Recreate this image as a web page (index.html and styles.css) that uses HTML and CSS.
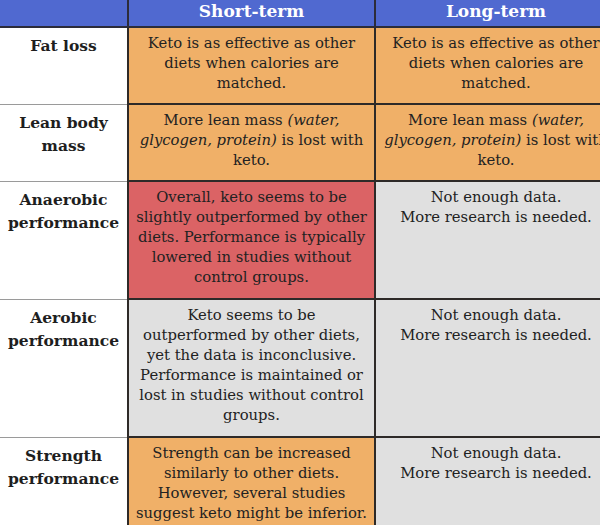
FILE: index.html
```html
<!DOCTYPE html>
<html>
<head>
<meta charset="utf-8">
<link rel="stylesheet" href="styles.css">
</head>
<body>
<table class="grid">
  <colgroup>
    <col class="c-label">
    <col class="c-short">
    <col class="c-long">
  </colgroup>
  <thead>
    <tr>
      <th class="head-blank"></th>
      <th class="head">Short-term</th>
      <th class="head">Long-term</th>
    </tr>
  </thead>
  <tbody>
    <tr class="r1">
      <th class="label">Fat loss</th>
      <td class="cell orange">Keto is as effective as other<br>diets when calories are<br>matched.</td>
      <td class="cell orange">Keto is as effective as other<br>diets when calories are<br>matched.</td>
    </tr>
    <tr class="r2">
      <th class="label">Lean body<br>mass</th>
      <td class="cell orange">More lean mass <em>(water,<br>glycogen, protein)</em> is lost with<br>keto.</td>
      <td class="cell orange">More lean mass <em>(water,<br>glycogen, protein)</em> is lost with<br>keto.</td>
    </tr>
    <tr class="r3">
      <th class="label">Anaerobic<br>performance</th>
      <td class="cell red">Overall, keto seems to be<br>slightly outperformed by other<br>diets. Performance is typically<br>lowered in studies without<br>control groups.</td>
      <td class="cell gray">Not enough data.<br>More research is needed.</td>
    </tr>
    <tr class="r4">
      <th class="label">Aerobic<br>performance</th>
      <td class="cell gray">Keto seems to be<br>outperformed by other diets,<br>yet the data is inconclusive.<br>Performance is maintained or<br>lost in studies without control<br>groups.</td>
      <td class="cell gray">Not enough data.<br>More research is needed.</td>
    </tr>
    <tr class="r5">
      <th class="label">Strength<br>performance</th>
      <td class="cell orange">Strength can be increased<br>similarly to other diets.<br>However, several studies<br>suggest keto might be inferior.</td>
      <td class="cell gray">Not enough data.<br>More research is needed.</td>
    </tr>
  </tbody>
</table>
</body>
</html>
```

FILE: styles.css
```css
html, body {
  margin: 0;
  padding: 0;
  background: #ffffff;
  overflow: hidden;
}

.grid {
  border-collapse: collapse;
  table-layout: fixed;
  width: 616px;
  font-family: "DejaVu Serif", "Liberation Serif", serif;
  color: #222;
}

.c-label { width: 128px; }
.c-short { width: 247px; }
.c-long { width: 241px; }

.head-blank,
.head {
  background: #5069d0;
  height: 26px;
  padding: 0;
  border-bottom: 2px solid #2c2c3a;
}

.head {
  color: #ffffff;
  font-size: 17px;
  font-weight: bold;
  text-align: center;
  vertical-align: top;
  line-height: 22px;
  border-left: 2px solid #2c2c3a;
}

.label {
  text-align: center;
  vertical-align: top;
  font-size: 15.5px;
  font-weight: bold;
  line-height: 23px;
  padding: 6px 2px 10px;
  color: #1e1e1e;
  border-bottom: 1px solid #9a9a9a;
  white-space: nowrap;
}

.cell {
  text-align: center;
  vertical-align: top;
  font-size: 14.8px;
  line-height: 20px;
  padding: 5px 2px 10px;
  border-left: 2px solid #2e2a28;
  border-bottom: 2px solid #2e2a28;
  white-space: nowrap;
  overflow: hidden;
}

.cell em { font-style: italic; }

.orange { background: #f0b068; }
.red { background: #db6365; }
.gray { background: #e0e0e0; }

.r1 { height: 76px; }
.r2 { height: 75px; }
.r3 { height: 118px; }
.r4 { height: 138px; }
.r5 { height: 95px; }
```
